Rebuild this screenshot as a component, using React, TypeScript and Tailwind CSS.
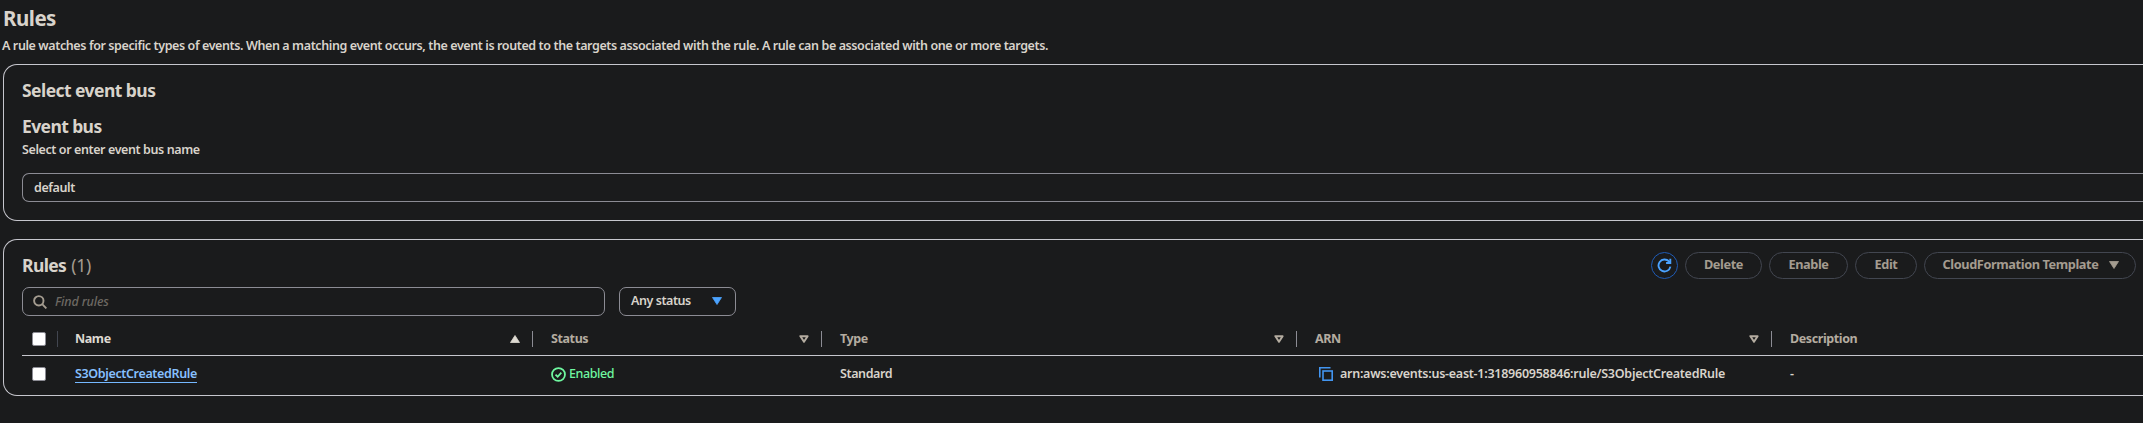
import React from "react";

type Dir = "up" | "down" | "outline";

function Caret({ dir, className }: { dir: Dir; className: string }) {
  return (
    <svg viewBox="0 0 10 8" className={"h-2 w-2.5 shrink-0 " + className} aria-hidden="true">
      {dir === "up" && <path d="M5 0.5 9.5 7.5H0.5Z" fill="currentColor" stroke="currentColor" strokeLinejoin="round" strokeWidth="0.8" />}
      {dir === "down" && <path d="M0.5 0.5H9.5L5 7.5Z" fill="currentColor" stroke="currentColor" strokeLinejoin="round" strokeWidth="0.8" />}
      {dir === "outline" && <path d="M1.4 1.2H8.6L5 6.8Z" fill="none" stroke="currentColor" strokeLinejoin="round" strokeWidth="2" />}
    </svg>
  );
}

function Box() {
  return <div className="size-3.5 rounded-[2px] border-[1.5px] border-[#8c8c94] bg-white" />;
}

function Button({ className, children }: { className: string; children: React.ReactNode }) {
  return (
    <button className={"flex h-[27px] items-center justify-center rounded-full border border-[#424650] pb-[2px] text-[12.75px] font-bold text-[#a49c90] " + className}>
      {children}
    </button>
  );
}

function Head({ label, className, labelClass, dir }: { label: string; className: string; labelClass: string; dir?: Dir }) {
  return (
    <div className={"flex items-center font-bold tracking-[-0.4px] " + className}>
      <span className={"pt-[2px] whitespace-nowrap " + labelClass}>{label}</span>
      {dir && (
        <div className="ml-auto flex items-center gap-3">
          <Caret dir={dir} className={dir === "up" ? "text-[#dedad2]" : "text-[#b4aca0]"} />
          <div className="h-4 w-px bg-[#8c8c94]" />
        </div>
      )}
    </div>
  );
}

export default function App() {
  return (
    <div className="h-[423px] w-full overflow-hidden bg-[#1a1b1c] font-['Noto_Sans',sans-serif] text-[12.5px] font-semibold tracking-[-0.4px] text-[#d8d3cb]">
      <header className="h-[64px] pl-[3px]">
        <h1 className="h-[35px] pt-[3px] text-[20.5px] leading-[30px] font-bold tracking-[-0.5px]">Rules</h1>
        <p className="-ml-px h-[22px] leading-[22px] tracking-[-0.4px] whitespace-nowrap">
          A rule watches for specific types of events. When a matching event occurs, the event is routed to the targets associated with the rule. A rule can be associated with one or more targets.
        </p>
      </header>

      <section className="ml-[3px] h-[157px] rounded-l-[14px] border border-r-0 border-[#c6c6cd] pl-[18px]">
        <h2 className="mt-[13px] h-6 text-[17.5px] leading-6 font-bold tracking-[-0.55px]">Select event bus</h2>
        <h3 className="mt-3 h-6 text-[17.5px] leading-6 font-bold tracking-[-0.6px]">Event bus</h3>
        <p className="mt-[2px] h-5 leading-5">Select or enter event bus name</p>
        <div className="mt-[13px] flex h-[29px] items-center rounded-l-[7px] border border-r-0 border-[#8c8c94] pt-[2px] pl-[11px]">default</div>
      </section>

      <section className="mt-[18px] ml-[3px] h-[157px] rounded-l-[14px] border border-r-0 border-[#c6c6cd] pl-[18px]">
        <div className="mt-3 flex h-[27px] items-center justify-between pr-[7px]">
          <h2 className="flex gap-[5px] text-[17.5px] font-bold tracking-[-0.6px]">
            <span>Rules</span>
            <span className="font-normal tracking-[-0.3px] text-[#a49c90]">(1)</span>
          </h2>
          <div className="flex gap-[7px]">
            <button className="flex size-[27px] items-center justify-center rounded-full border border-[#1f5bb5]">
              <svg viewBox="0 0 16 16" className="size-[15px] text-[#4ba3ff]" fill="none" stroke="currentColor" strokeWidth="2" aria-hidden="true">
                <path d="M14.3 9.2A6.4 6.4 0 1 1 12.8 3.7L14 5" />
                <path d="M14.2 0.8V5.3H9.7" />
              </svg>
            </button>
            <Button className="w-[77px]">Delete</Button>
            <Button className="w-[79px]">Enable</Button>
            <Button className="w-[62px]">Edit</Button>
            <Button className="w-[212px] gap-[11px] pl-[2px] tracking-[-0.4px]">
              <span>CloudFormation Template</span>
              <Caret dir="down" className="mt-px" />
            </Button>
          </div>
        </div>

        <div className="mt-2 flex gap-[14px]">
          <div className="flex h-[29px] w-[583px] items-center rounded-[7px] border border-[#8c8c94] pl-[10px]">
            <svg viewBox="0 0 14 14" className="size-[14px] text-[#a49c90]" fill="none" stroke="currentColor" strokeWidth="1.9" aria-hidden="true">
              <circle cx="5.8" cy="5.8" r="4.7" />
              <path d="m9.2 9.2 4.2 4.2" />
            </svg>
            <span className="ml-[8px] pt-[2px] font-medium tracking-[-0.15px] text-[#6d6963] italic">Find rules</span>
          </div>
          <div className="flex h-[29px] w-[117px] items-center justify-between rounded-[7px] border border-[#8c8c94] pr-[13px] pb-[2px] pl-[11px]">
            <span className="pt-[2px] tracking-[-0.45px]">Any status</span>
            <Caret dir="down" className="text-[#4ba3ff]" />
          </div>
        </div>

        <div className="flex h-10 items-center border-b border-[#c6c6cd] pt-[6px]">
          <div className="flex w-[54px] items-center gap-[11px] pl-[10px]">
            <Box />
            <div className="h-4 w-px bg-[#424650]" />
          </div>
          <Head label="Name" dir="up" className="w-[457px]" labelClass="text-[#dedad2] -ml-px" />
          <Head label="Status" dir="outline" className="ml-[18px] w-[271px]" labelClass="text-[#b4aca0]" />
          <Head label="Type" dir="outline" className="ml-[18px] w-[457px]" labelClass="text-[#b4aca0]" />
          <Head label="ARN" dir="outline" className="ml-[18px] w-[457px]" labelClass="text-[#b4aca0]" />
          <Head label="Description" className="ml-[18px]" labelClass="text-[#b4aca0]" />
        </div>

        <div className="flex h-[36px] items-center whitespace-nowrap">
          <div className="w-[53px] pl-[10px]">
            <Box />
          </div>
          <div className="w-[476px]">
            <a className="border-b border-[#75b8ff] tracking-[-0.36px] text-[#86c0ff]">S3ObjectCreatedRule</a>
          </div>
          <div className="flex w-[289px] items-center gap-[3px] text-[#6ff7a0]">
            <svg viewBox="0 0 16 16" className="size-[15px]" fill="none" stroke="currentColor" strokeWidth="1.9" aria-hidden="true">
              <circle cx="8" cy="8" r="6.9" />
              <path d="m4.8 8.2 2.3 2.2 3.9-4.4" />
            </svg>
            <span className="font-medium">Enabled</span>
          </div>
          <div className="w-[475px]">Standard</div>
          <div className="flex w-[475px] items-center gap-[7px] pl-[4px]">
            <svg viewBox="0 0 14 14" className="size-[14px] text-[#4295f0]" fill="none" stroke="currentColor" strokeWidth="1.6" aria-hidden="true">
              <path d="M0.8 10.5V0.8H11.5" />
              <rect x="4" y="4" width="9.2" height="9.2" />
            </svg>
            <span className="tracking-[-0.26px]">arn:aws:events:us-east-1:318960958846:rule/S3ObjectCreatedRule</span>
          </div>
          <div>-</div>
        </div>
      </section>
    </div>
  );
}
